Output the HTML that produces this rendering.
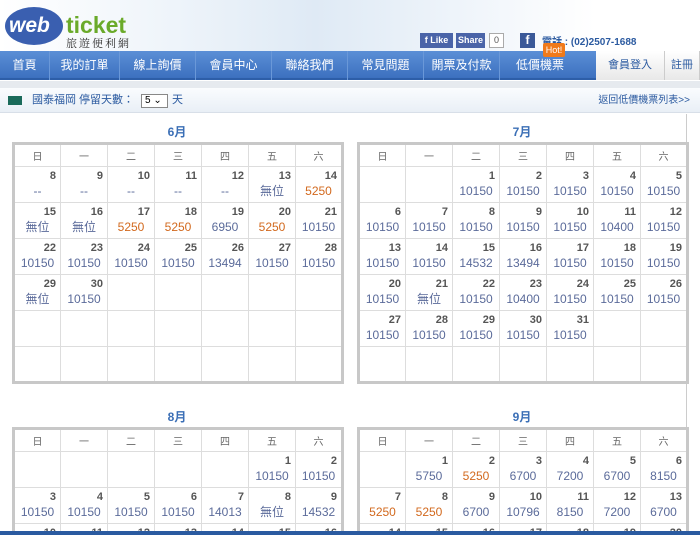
<!DOCTYPE html>
<html><head><meta charset="utf-8"><style>
*{margin:0;padding:0;box-sizing:border-box}
html,body{width:700px;height:535px;overflow:hidden}
body{background:#fff;font-family:"Liberation Sans","Noto Sans CJK TC",sans-serif;position:relative}
.hdr{position:absolute;left:0;top:0;width:700px;height:51px;background:linear-gradient(90deg,#fff 0%,#eef4fa 25%,#dfeaf5 45%,#eef4fa 65%,#fff 85%)}
.logo{position:absolute;left:4px;top:4px}
.nav{position:absolute;left:0;top:51px;width:700px;height:29px;background:linear-gradient(#5b8fd6,#3c70bf);border-bottom:2px solid #2d5ea8}
.nav span{position:absolute;top:0;height:29px;line-height:29px;color:#fff;font-size:12px;text-align:center;border-right:1px solid #6a98d8}
.nav .w{background:linear-gradient(#fff,#e8e8e8);color:#2b5aa0;border-right:1px solid #ccc}
.strip{position:absolute;left:0;top:81px;width:700px;height:7px;background:#e6eaef}
.bar{position:absolute;left:0;top:88px;width:700px;height:25px;background:linear-gradient(#fafcfe,#e9eff6);border-bottom:1px solid #d8dfe8;font-size:11px;color:#2b5aa0;line-height:25px}
.main{position:absolute;left:0;top:114px;width:687px;height:421px;border-right:1px solid #ccc}
.mt{position:absolute;width:330px;text-align:center;color:#3b6fb6;font-weight:bold;font-size:12px}
table{position:absolute;border:3px solid #c8c8c8;border-collapse:collapse;table-layout:fixed;width:330px}
td,th{border:1px solid #ddd;width:47px;font-size:12px;position:relative}
th{height:23px;font-weight:normal;color:#666;font-size:10px}
td{height:36px;vertical-align:top}
td b{display:block;text-align:right;padding-right:4px;color:#555;font-size:11px;line-height:14px;margin-top:2px}
td i{display:block;font-style:normal;text-align:center;color:#5b6b9a;font-size:12px;line-height:16px}
td i.o{color:#d2691e}
.task{position:absolute;left:0;top:531px;width:700px;height:4px;background:#2a5aa0}
</style></head><body>
<div class="hdr">
<svg class="logo" width="140" height="44"><ellipse cx="30" cy="22" rx="29" ry="19" fill="#3a5fb0"/><text x="5" y="28" font-family="Liberation Sans" font-weight="bold" font-style="italic" font-size="21" fill="#fff">web</text><text x="62" y="29" font-family="Liberation Sans" font-weight="bold" font-size="23" fill="#6aaa2a">ticket</text><text x="62" y="43" font-family="Noto Serif CJK SC,serif" font-size="11" fill="#333" letter-spacing="2">旅遊便利網</text></svg>
<div style="position:absolute;left:420px;top:33px;width:33px;height:15px;background:#4a64a8;color:#fff;font-size:9px;line-height:15px;text-align:center;font-weight:bold">f Like</div>
<div style="position:absolute;left:456px;top:33px;width:29px;height:15px;background:#4a64a8;color:#fff;font-size:9px;line-height:15px;text-align:center;font-weight:bold">Share</div>
<div style="position:absolute;left:489px;top:33px;width:15px;height:15px;border:1px solid #aaa;background:#fff;font-size:9px;line-height:13px;text-align:center;color:#555">0</div>
<div style="position:absolute;left:520px;top:33px;width:15px;height:15px;background:#3b5998;color:#fff;font-size:12px;font-weight:bold;line-height:15px;text-align:center">f</div>
<div style="position:absolute;left:542px;top:33px;font-size:10px;color:#2b5aa0;font-weight:bold">電話 : (02)2507-1688</div>
</div>
<div class="nav">
<span style="left:0;width:50px">首頁</span><span style="left:50px;width:70px">我的訂單</span><span style="left:120px;width:76px">線上詢價</span><span style="left:196px;width:76px">會員中心</span><span style="left:272px;width:76px">聯絡我們</span><span style="left:348px;width:76px">常見問題</span><span style="left:424px;width:76px">開票及付款</span><span style="left:500px;width:80px;border:none">低價機票</span>
<span class="w" style="left:596px;width:69px;font-size:11px">會員登入</span><span class="w" style="left:665px;width:35px;font-size:11px">註冊</span>
</div>
<div style="position:absolute;left:543px;top:43px;width:22px;height:14px;background:#f07a1a;color:#fff;font-size:9px;text-align:center;line-height:14px;border-radius:2px">Hot!</div>
<div class="strip"></div>
<div class="bar"><span style="position:absolute;left:8px;top:8px;width:14px;height:9px;background:#1a6a5a"></span><span style="position:absolute;left:32px">國泰福岡 停留天數：</span><span style="position:absolute;left:141px;top:6px;width:27px;height:14px;border:1px solid #888;background:#fff;color:#000;font-size:10px;line-height:12px;padding-left:3px">5 ⌄</span><span style="position:absolute;left:172px">天</span><span style="position:absolute;right:10px;font-size:10px">返回低價機票列表&gt;&gt;</span></div>
<div class="main"></div>
<div class="mt" style="left:12px;top:123px">6月</div>
<div class="mt" style="left:357px;top:123px">7月</div>
<div class="mt" style="left:12px;top:408px">8月</div>
<div class="mt" style="left:357px;top:408px">9月</div>

<table style="left:12px;top:142px"><tr><th>日</th><th>一</th><th>二</th><th>三</th><th>四</th><th>五</th><th>六</th></tr>
<tr><td><b>8</b><i>--</i></td><td><b>9</b><i>--</i></td><td><b>10</b><i>--</i></td><td><b>11</b><i>--</i></td><td><b>12</b><i>--</i></td><td><b>13</b><i>無位</i></td><td><b>14</b><i class="o">5250</i></td></tr>
<tr><td><b>15</b><i>無位</i></td><td><b>16</b><i>無位</i></td><td><b>17</b><i class="o">5250</i></td><td><b>18</b><i class="o">5250</i></td><td><b>19</b><i>6950</i></td><td><b>20</b><i class="o">5250</i></td><td><b>21</b><i>10150</i></td></tr>
<tr><td><b>22</b><i>10150</i></td><td><b>23</b><i>10150</i></td><td><b>24</b><i>10150</i></td><td><b>25</b><i>10150</i></td><td><b>26</b><i>13494</i></td><td><b>27</b><i>10150</i></td><td><b>28</b><i>10150</i></td></tr>
<tr><td><b>29</b><i>無位</i></td><td><b>30</b><i>10150</i></td><td></td><td></td><td></td><td></td><td></td></tr>
<tr><td></td><td></td><td></td><td></td><td></td><td></td><td></td></tr>
<tr><td></td><td></td><td></td><td></td><td></td><td></td><td></td></tr></table>

<table style="left:357px;top:142px"><tr><th>日</th><th>一</th><th>二</th><th>三</th><th>四</th><th>五</th><th>六</th></tr>
<tr><td></td><td></td><td><b>1</b><i>10150</i></td><td><b>2</b><i>10150</i></td><td><b>3</b><i>10150</i></td><td><b>4</b><i>10150</i></td><td><b>5</b><i>10150</i></td></tr>
<tr><td><b>6</b><i>10150</i></td><td><b>7</b><i>10150</i></td><td><b>8</b><i>10150</i></td><td><b>9</b><i>10150</i></td><td><b>10</b><i>10150</i></td><td><b>11</b><i>10400</i></td><td><b>12</b><i>10150</i></td></tr>
<tr><td><b>13</b><i>10150</i></td><td><b>14</b><i>10150</i></td><td><b>15</b><i>14532</i></td><td><b>16</b><i>13494</i></td><td><b>17</b><i>10150</i></td><td><b>18</b><i>10150</i></td><td><b>19</b><i>10150</i></td></tr>
<tr><td><b>20</b><i>10150</i></td><td><b>21</b><i>無位</i></td><td><b>22</b><i>10150</i></td><td><b>23</b><i>10400</i></td><td><b>24</b><i>10150</i></td><td><b>25</b><i>10150</i></td><td><b>26</b><i>10150</i></td></tr>
<tr><td><b>27</b><i>10150</i></td><td><b>28</b><i>10150</i></td><td><b>29</b><i>10150</i></td><td><b>30</b><i>10150</i></td><td><b>31</b><i>10150</i></td><td></td><td></td></tr>
<tr><td></td><td></td><td></td><td></td><td></td><td></td><td></td></tr></table>

<table style="left:12px;top:427px"><tr><th>日</th><th>一</th><th>二</th><th>三</th><th>四</th><th>五</th><th>六</th></tr>
<tr><td></td><td></td><td></td><td></td><td></td><td><b>1</b><i>10150</i></td><td><b>2</b><i>10150</i></td></tr>
<tr><td><b>3</b><i>10150</i></td><td><b>4</b><i>10150</i></td><td><b>5</b><i>10150</i></td><td><b>6</b><i>10150</i></td><td><b>7</b><i>14013</i></td><td><b>8</b><i>無位</i></td><td><b>9</b><i>14532</i></td></tr>
<tr><td><b>10</b><i>10150</i></td><td><b>11</b><i>10150</i></td><td><b>12</b><i>10150</i></td><td><b>13</b><i>10150</i></td><td><b>14</b><i>10150</i></td><td><b>15</b><i>10150</i></td><td><b>16</b><i>10150</i></td></tr></table>

<table style="left:357px;top:427px"><tr><th>日</th><th>一</th><th>二</th><th>三</th><th>四</th><th>五</th><th>六</th></tr>
<tr><td></td><td><b>1</b><i>5750</i></td><td><b>2</b><i class="o">5250</i></td><td><b>3</b><i>6700</i></td><td><b>4</b><i>7200</i></td><td><b>5</b><i>6700</i></td><td><b>6</b><i>8150</i></td></tr>
<tr><td><b>7</b><i class="o">5250</i></td><td><b>8</b><i class="o">5250</i></td><td><b>9</b><i>6700</i></td><td><b>10</b><i>10796</i></td><td><b>11</b><i>8150</i></td><td><b>12</b><i>7200</i></td><td><b>13</b><i>6700</i></td></tr>
<tr><td><b>14</b><i>6700</i></td><td><b>15</b><i>6700</i></td><td><b>16</b><i>6700</i></td><td><b>17</b><i>6700</i></td><td><b>18</b><i>6700</i></td><td><b>19</b><i>6700</i></td><td><b>20</b><i>6700</i></td></tr></table>
<div class="task"></div>
</body></html>
